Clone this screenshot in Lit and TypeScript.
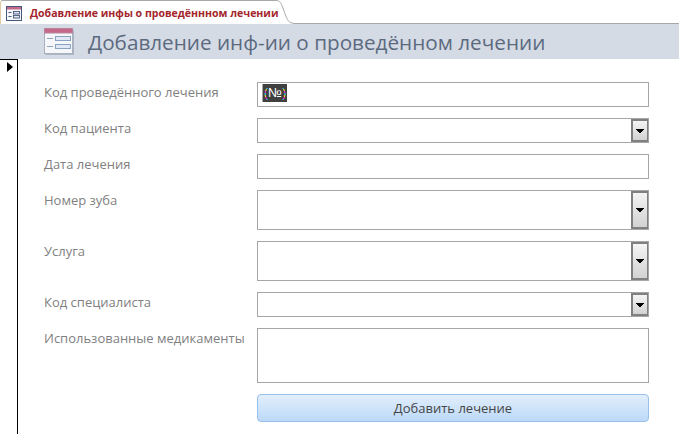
import { LitElement, html, css } from "lit";
import { customElement } from "lit/decorators.js";

const fields = [
  { label: "Код проведённого лечения", h: 25, combo: false, value: true },
  { label: "Код пациента", h: 25, combo: true },
  { label: "Дата лечения", h: 25, combo: false },
  { label: "Номер зуба", h: 40, combo: true },
  { label: "Услуга", h: 40, combo: true },
  { label: "Код специалиста", h: 25, combo: true },
  { label: "Использованные медикаменты", h: 55, combo: false },
];

const headerIcon = html`<svg width="30" height="27" viewBox="0 0 30 27">
  <rect x="1.5" y="2" width="28.5" height="25" fill="#8d97a8" opacity=".55"/>
  <rect x="0.5" y="0.5" width="28" height="25" fill="#f5f7fb" stroke="#a9b1c0"/>
  <rect x="0.5" y="0.5" width="28" height="4.5" fill="#c5688a" stroke="#b7869b"/>
  <path d="M3 10.5h6M3 18.5h6" stroke="#8fa3bd"/>
  <rect x="11.5" y="8.5" width="15" height="4" fill="#dfe8f4" stroke="#8aa3c2"/>
  <rect x="11.5" y="16.5" width="15" height="4" fill="#dfe8f4" stroke="#8aa3c2"/>
</svg>`;

const tabIcon = html`<svg width="16" height="15" viewBox="0 0 16 15">
  <rect x="0.5" y="0.5" width="15" height="14" fill="#f4f6fb" stroke="#46587a"/>
  <rect x="1" y="1" width="14" height="2.5" fill="#c5688a"/>
  <path d="M2.5 6.5h3M2.5 10.5h3" stroke="#46587a"/>
  <rect x="7.5" y="5.5" width="6" height="2.5" fill="#dfe8f4" stroke="#46587a" stroke-width=".9"/>
  <rect x="7.5" y="9.5" width="6" height="2.5" fill="#dfe8f4" stroke="#46587a" stroke-width=".9"/>
</svg>`;

@customElement("app-root")
export class AppRoot extends LitElement {
  static styles = css`
    :host {
      display: block;
      width: 679px;
      height: 434px;
      overflow: hidden;
      background: #fff;
      font-family: "Open Sans", "Noto Sans", sans-serif;
    }
    .tabbar {
      display: flex;
      height: 24px;
    }
    .tab {
      display: flex;
      align-items: center;
      gap: 8px;
      width: 275px;
      box-sizing: border-box;
      padding: 1px 0 0 5px;
      border-top: 1px solid #a8a8a8;
      border-left: 1px solid #e3c9a4;
      border-top-left-radius: 3px;
      background: #fff;
    }
    .tab-text {
      font-size: 10.55px;
      font-weight: 700;
      color: #a4262c;
      white-space: nowrap;
      line-height: 14px;
    }
    .tab-icon {
      flex: none;
      display: flex;
    }
    .curve {
      flex: none;
      display: block;
    }
    .tab-rest {
      flex: 1;
      border-bottom: 1px solid #a8a8a8;
    }
    .header {
      height: 35px;
      box-sizing: border-box;
      background: #d5dbe5;
      display: flex;
      align-items: center;
      padding-left: 44px;
      gap: 14px;
    }
    .header-icon {
      display: flex;
      flex: none;
    }
    .title {
      font-size: 20.7px;
      color: #5c6a80;
      white-space: nowrap;
      line-height: 28px;
    }
    .body {
      display: flex;
      height: 375px;
    }
    .selector {
      width: 18px;
      box-sizing: border-box;
      border-top: 1px solid #000;
      border-right: 1px solid #000;
      flex: none;
      padding: 2px 0 0 7px;
    }
    .selector svg {
      display: block;
    }
    .form {
      flex: 1;
      display: grid;
      grid-template-columns: 213px 392px;
      row-gap: 11px;
      align-content: start;
      padding: 23px 0 0 26px;
    }
    .label {
      font-size: 13px;
      line-height: 18px;
      color: #7f7f7f;
      padding-top: 1px;
      white-space: nowrap;
    }
    .field {
      box-sizing: border-box;
      border: 1px solid #a6a6a6;
      background: #fff;
      display: flex;
      justify-content: space-between;
    }
    .value {
      height: 18px;
      width: 25px;
      box-sizing: border-box;
      margin: 1px 0 0 4px;
      text-align: center;
      background: #404040;
      border-left: 1px solid #a6a6a6;
      font-family: "Liberation Sans", sans-serif;
      font-size: 13px;
      line-height: 18px;
      color: #fff;
      white-space: nowrap;
    }
    .value i {
      font-style: normal;
      color: transparent;
      background: repeating-linear-gradient(to bottom, #ff30e0 0 2px, #30e0ff 2px 4px, #ffe030 4px 6px);
      -webkit-background-clip: text;
      background-clip: text;
    }
    .drop {
      width: 17px;
      box-sizing: border-box;
      border: 2px solid #808080;
      border-right-width: 1px;
      background: linear-gradient(to bottom, #f4f4f4, #d2d2d2);
      display: flex;
      align-items: center;
      justify-content: center;
    }
    .btn {
      grid-column: 2;
      height: 28px;
      box-sizing: border-box;
      border: 1px solid #98c1ea;
      border-radius: 4px;
      background: linear-gradient(to bottom, #e3effc, #bcd9f8);
      font-family: inherit;
      font-size: 13px;
      color: #454545;
      padding: 0;
    }
  `;

  render() {
    return html`
      <div class="tabbar">
        <div class="tab">
          <span class="tab-icon">${tabIcon}</span>
          <span class="tab-text">Добавление инфы о проведённном лечении</span>
        </div>
        <svg class="curve" width="18" height="24" viewBox="0 0 18 24">
          <path d="M0 .5h1C5 .5 6 3 8 8c2 5 4 15 9 15h1" fill="#fff" stroke="#a8a8a8"/>
        </svg>
        <div class="tab-rest"></div>
      </div>
      <div class="header">
        <span class="header-icon">${headerIcon}</span>
        <span class="title">Добавление инф-ии о проведённом лечении</span>
      </div>
      <div class="body">
        <div class="selector">
          <svg width="6" height="10" viewBox="0 0 6 10"><path d="M0 0l6 5-6 5z" fill="#000"/></svg>
        </div>
        <div class="form">
          ${fields.map(
            (f) => html`
              <div class="label">${f.label}</div>
              <div class="field" style="height:${f.h}px">
                ${f.value ? html`<span class="value"><i>(</i>№<i>)</i></span>` : html`<span></span>`}
                ${f.combo
                  ? html`<span class="drop">
                      <svg width="8" height="4" viewBox="0 0 8 4"><path d="M0 0h8v1H7v1H6v1H5v1H3V3H2V2H1V1H0z" fill="#000"/></svg>
                    </span>`
                  : ""}
              </div>
            `
          )}
          <button class="btn">Добавить лечение</button>
        </div>
      </div>
    `;
  }
}
